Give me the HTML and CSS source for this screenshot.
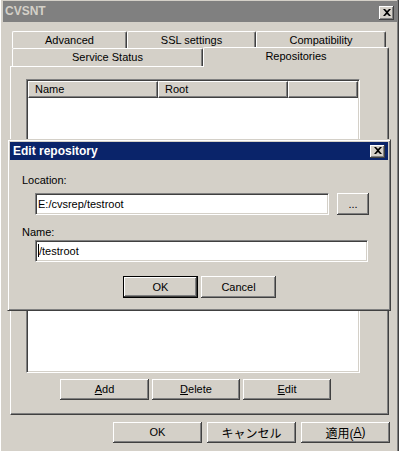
FILE: index.html
```html
<!DOCTYPE html>
<html lang="en">
<head>
    <meta charset="UTF-8">
    <title>CVSNT</title>
    <link rel="stylesheet" href="styles.css">
</head>
<body>
    <div class="window">
        <div class="titlebar">
            <span class="caption">CVSNT</span>
            <span class="cap-btn">
                <svg width="8" height="7" viewBox="0 0 8 7"><path d="M0 0h2l2 2 2-2h2L5 3.5 8 7H6L4 5 2 7H0l3-3.5z" fill="#000"/></svg>
            </span>
        </div>

        <div class="tabstrip">
            <div class="tab-row back">
                <div class="tab tab-adv">Advanced</div>
                <div class="tab tab-ssl">SSL settings</div>
                <div class="tab tab-compat">Compatibility</div>
            </div>
            <div class="tab-row front">
                <div class="tab tab-status">Service Status</div>
                <div class="tab tab-repos selected">Repositories</div>
            </div>
            <div class="tabpanel">
                <div class="listview">
                    <div class="list-header">
                        <div class="col col-name">Name</div>
                        <div class="col col-root">Root</div>
                        <div class="col col-fill"></div>
                    </div>
                </div>
                <div class="list-buttons">
                    <div class="btn"><span><u>A</u>dd</span></div>
                    <div class="btn"><span><u>D</u>elete</span></div>
                    <div class="btn"><span><u>E</u>dit</span></div>
                </div>
            </div>
        </div>

        <div class="footer">
            <div class="btn wide">OK</div>
            <div class="btn wide jp">キャンセル</div>
            <div class="btn wide jp">適用(<u>A</u>)</div>
        </div>

        <!-- modal sits over the property sheet -->
        <div class="dialog">
            <div class="dialog-title">
                <span>Edit repository</span>
                <span class="cap-btn small">
                    <svg width="8" height="7" viewBox="0 0 8 7"><path d="M0 0h2l2 2 2-2h2L5 3.5 8 7H6L4 5 2 7H0l3-3.5z" fill="#000"/></svg>
                </span>
            </div>
            <div class="dialog-body">
                <div class="field-label">Location:</div>
                <div class="field-row">
                    <div class="edit location">E:/cvsrep/testroot</div>
                    <div class="btn browse">...</div>
                </div>
                <div class="field-label name-label">Name:</div>
                <div class="field-row tight">
                    <div class="edit name"><span class="caret"></span>/testroot</div>
                </div>
                <div class="dialog-buttons">
                    <div class="btn default">OK</div>
                    <div class="btn">Cancel</div>
                </div>
            </div>
        </div>
    </div>
</body>
</html>
```

FILE: styles.css
```css
*{
    box-sizing: border-box;
}
html,
body {
    margin: 0;
    padding: 0;
    background-color: #d4d0c8;
    font-family: "Liberation Sans", "Noto Sans CJK JP", Arial, sans-serif;
    font-size: 11px;
    color: #000;
}
.window {
    position: relative;
    width: 399px;
    height: 451px;
    padding: 1px 2px 0 3px;
    background-color: #d4d0c8;
    box-shadow: inset 1px 0 #fff, inset -1px 0 #404040, inset -2px 0 #808080;
    overflow: hidden;
}

/* caption bars */
.titlebar {
    height: 21px;
    background-color: #808080;
    display: flex;
    align-items: flex-start;
    justify-content: space-between;
    padding: 0 3px 0 2px;
}
.titlebar .caption {
    font-size: 12px;
    font-weight: bold;
    color: #d4d0c8;
    line-height: 21px;
}
.cap-btn {
    width: 15px;
    height: 14px;
    margin-top: 5px;
    display: flex;
    align-items: center;
    justify-content: center;
    background-color: #d4d0c8;
    box-shadow: inset -1px -1px #404040, inset 1px 1px #fff, inset -2px -2px #808080;
}
.cap-btn svg {
    display: block;
    margin-top: -1px;
}
.cap-btn.small {
    height: 13px;
    margin-top: 0;
}

/* tabs */
.tabstrip {
    margin: 9px 0 0 7px;
    width: 379px;
}
.tab-row {
    display: flex;
    padding-left: 2px;
}
.tab-row.back {
    height: 17px;
}
.tab-row.front {
    height: 18px;
    position: relative;
    z-index: 2;
}
.tab {
    display: flex;
    align-items: center;
    justify-content: center;
    height: 100%;
    background-color: #d4d0c8;
    border-top: 1px solid #fff;
    border-left: 1px solid #fff;
    border-right: 1px solid #404040;
    border-top-left-radius: 2px;
    border-top-right-radius: 2px;
    box-shadow: inset -1px 0 #808080;
    padding-bottom: 1px;
}
.tab-adv { width: 115px; }
.tab-ssl { width: 129px; }
.tab-compat { width: 130px; }
.tab-status { width: 191px; }
.tab-repos { width: 186px; }
.tab.selected {
    height: 20px;
    margin-top: -1px;
    padding-bottom: 4px;
}

.tabpanel {
    height: 349px;
    border: 1px solid;
    border-color: #fff #404040 #404040 #fff;
    box-shadow: inset -1px -1px #808080;
    padding: 12px 0 0 15px;
}

/* list view */
.listview {
    width: 334px;
    height: 294px;
    background-color: #fff;
    border: 1px solid;
    border-color: #808080 #fff #fff #808080;
    box-shadow: inset 1px 1px #404040, inset -1px -1px #d4d0c8;
    padding: 1px;
}
.list-header {
    display: flex;
    height: 17px;
}
.col {
    height: 100%;
    background-color: #d4d0c8;
    border: 1px solid;
    border-color: #fff #404040 #404040 #fff;
    box-shadow: inset -1px -1px #808080;
    padding-left: 6px;
    line-height: 14px;
}
.col-name { width: 130px; }
.col-root { width: 130px; }
.col-fill { flex: 1; }

/* push buttons */
.btn {
    display: flex;
    align-items: center;
    justify-content: center;
    height: 21px;
    background-color: #d4d0c8;
    box-shadow: inset -1px -1px #404040, inset 1px 1px #fff, inset -2px -2px #808080;
    padding-bottom: 1px;
}
.list-buttons {
    display: flex;
    gap: 3px;
    margin: 6px 0 0 34px;
}
.list-buttons .btn {
    width: 88px;
}
.list-buttons .btn:first-child {
    width: 89px;
}
.footer {
    display: flex;
    justify-content: flex-end;
    gap: 5px;
    margin-top: 7px;
    padding-right: 7px;
}
.btn.wide {
    width: 89px;
}
.btn.jp {
    font-size: 12px;
}

/* edit repository dialog */
.dialog {
    position: absolute;
    left: 7px;
    top: 139px;
    width: 384px;
    height: 172px;
    z-index: 10;
    background-color: #d4d0c8;
    border: 1px solid;
    border-color: #d4d0c8 #404040 #404040 #d4d0c8;
    box-shadow: inset 1px 1px #fff, inset -1px -1px #808080;
    padding: 2px;
}
.dialog-title {
    height: 18px;
    background-color: #0a246a;
    color: #fff;
    font-size: 12px;
    font-weight: bold;
    display: flex;
    align-items: center;
    justify-content: space-between;
    padding: 0 3px 0 3px;
}
.dialog-body {
    padding: 14px 0 0 12px;
}
.field-label {
    line-height: 13px;
}
.name-label {
    margin-top: 11px;
}
.field-row {
    display: flex;
    gap: 8px;
    margin: 6px 0 0 13px;
}
.field-row.tight {
    margin-top: 1px;
}
.edit {
    display: flex;
    align-items: center;
    height: 22px;
    background-color: #fff;
    border: 1px solid;
    border-color: #808080 #fff #fff #808080;
    box-shadow: inset 1px 1px #404040, inset -1px -1px #d4d0c8;
    padding: 0 0 1px 2px;
}
.edit.location {
    width: 294px;
}
.edit.name {
    width: 333px;
}
.caret {
    display: inline-block;
    width: 1px;
    height: 13px;
    background-color: #000;
}
.btn.browse {
    width: 32px;
    height: 22px;
}
.dialog-buttons {
    display: flex;
    gap: 3px;
    margin: 14px 0 0 101px;
}
.dialog-buttons .btn {
    width: 75px;
    height: 22px;
}
.btn.default {
    box-shadow: inset 0 0 0 1px #000, inset -2px -2px #404040, inset 2px 2px #fff, inset -3px -3px #808080;
}
```
